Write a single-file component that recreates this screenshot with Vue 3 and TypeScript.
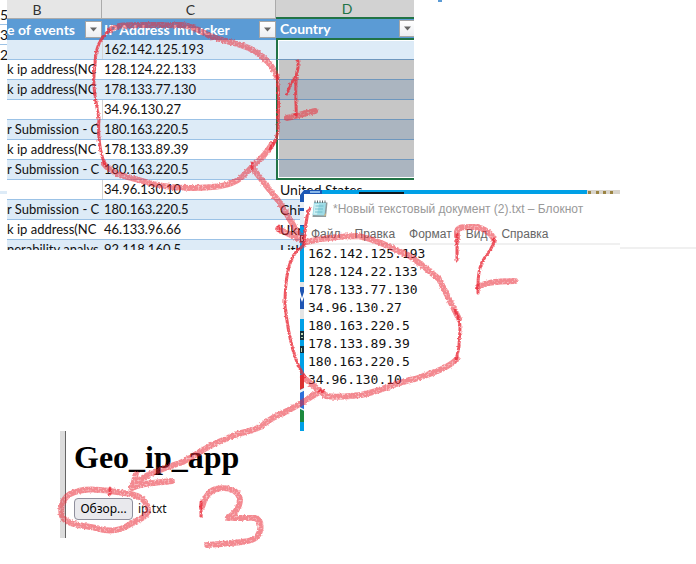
<script setup lang="ts">
import { ref } from 'vue'

interface Row {
  event: string
  ip: string
  country: string
}

const rows: Row[] = [
  { event: '', ip: '162.142.125.193', country: '' },
  { event: 'k ip address(NC', ip: '128.124.22.133', country: '' },
  { event: 'k ip address(NC', ip: '178.133.77.130', country: '' },
  { event: '', ip: '34.96.130.27', country: '' },
  { event: 'r Submission - C', ip: '180.163.220.5', country: '' },
  { event: 'k ip address(NC', ip: '178.133.89.39', country: '' },
  { event: 'r Submission - C', ip: '180.163.220.5', country: '' },
  { event: '', ip: '34.96.130.10', country: 'United States' },
  { event: 'r Submission - C', ip: '180.163.220.5', country: 'Chi' },
  { event: 'k ip address(NC', ip: '46.133.96.66', country: 'Ukr' },
  { event: 'nerability analys', ip: '92.118.160.5', country: 'Lith' },
]
const selectedRows = 7

const headers = ['e of events', 'IP Address Intrucker', 'Country']
const menu = ['Файл', 'Правка', 'Формат', 'Вид', 'Справка']
const edge = ['5.', '3', '2']

const note = ref(rows.slice(0, 8).map((r) => r.ip).join('\n'))
</script>

<template>
  <main class="board">
    <div class="edge">
      <span v-for="e in edge" :key="e">{{ e }}</span>
    </div>
    <div class="edge-line"></div>
    <div class="tick"></div>
    <div class="rule"></div>

    <section class="sheet">
      <table>
        <colgroup>
          <col class="col-b" />
          <col class="col-c" />
          <col class="col-d" />
        </colgroup>
        <thead>
          <tr class="letters">
            <th>B</th>
            <th>C</th>
            <th class="active">D</th>
          </tr>
          <tr class="titles">
            <th v-for="h in headers" :key="h">
              <div class="title">
                <span>{{ h }}</span>
                <button type="button" :aria-label="'Filter ' + h">
                  <svg viewBox="0 0 9 5" width="9" height="5"><path d="M1 0.5H8L4.500 4.500Z" fill="#666" /></svg>
                </button>
              </div>
            </th>
          </tr>
        </thead>
        <tbody>
          <tr v-for="(r, i) in rows" :key="i" :class="{ band: i % 2 === 0, selected: i < selectedRows, first: i === 0, last: i === selectedRows - 1 }">
            <td>{{ r.event }}</td>
            <td :class="{ open: !r.event }">{{ r.ip }}</td>
            <td class="country">{{ r.country }}</td>
          </tr>
        </tbody>
      </table>
    </section>

    <section class="notepad">
      <svg class="desk" viewBox="0 0 320 241" width="320" height="241" aria-hidden="true">
        <path d="M0 0H287V4H4V241H0Z" fill="#00a0e6" />
        <path d="M0 0H22V4H4V36H0Z" fill="#1c57b5" />
        <path d="M10 1H20V3H10Z" fill="#8bb8e8" />
        <path d="M0 0H4L0 5ZM0 12H4V18H0ZM0 21H4V35H0Z" fill="#e8eef5" />
        <path d="M59 2H104V4H59Z" fill="#10171c" />
        <path d="M0 45H4V52H0Z" fill="#1b3f50" />
        <path d="M1 46H3V47H2V49H3V51H1Z" fill="#e8eef5" />
        <path d="M287 0H320V4H287Z" fill="#d9d5cd" />
        <path d="M288 1h3v3h-3zM296 1h3v3h-3zM303 1h3v3h-3zM310 1h3v3h-3z" fill="#9b8443" />
        <path d="M0 92H4V97H0Z" fill="#e4e4e4" />
        <path d="M0 97H4V119H0Z" fill="#1f55b3" />
        <path d="M0 101L2 108L4 102V107L2 112L0 107Z" fill="#fff" />
        <path d="M0 119H4V129H0Z" fill="#e4e4e4" />
        <path d="M0 141H4V150H0ZM0 156H4V163H0Z" fill="#14303c" />
        <path d="M1 143H3V145H1ZM1 147H3V148H1ZM1 158H2V162H1Z" fill="#b9d3b0" />
        <path d="M0 185H4V198L0 200Z" fill="#d93030" />
        <path d="M0 200L4 198V201L0 203ZM0 217L4 219V221L0 219Z" fill="#eef2f6" />
        <path d="M0 203L4 201V219L0 217Z" fill="#2d6fd9" />
        <path d="M0 219L4 221V232H0Z" fill="#1d8a3e" />
      </svg>
      <div class="window">
        <header>
          <svg class="icon" viewBox="0 0 16 18" width="16" height="18" aria-hidden="true">
            <path d="M2.500 2L15.500 2.500L14 17H0.500Z" fill="#8f9a9c" />
            <path d="M2 2L14 2.500L12.500 15.500L0.500 15Z" fill="#9fdce6" />
            <path d="M2.500 4L7 4L5 14.500L1.500 14.500Z" fill="#cdf0f4" />
            <path d="M3.500 6H11.500M3 9H11M3 12H10.500" stroke="#62b4c4" stroke-width="0.800" />
            <path d="M3 0.500V3M5.500 0.500V3M8 0.500V3M10.500 0.500V3M13 0.500V3" stroke="#626b6e" />
            <path d="M12 15.500L14 13L13.500 16Z" fill="#e2c27c" />
          </svg>
          <span>*Новый текстовый документ (2).txt – Блокнот</span>
        </header>
        <nav>
          <button v-for="m in menu" :key="m" type="button">{{ m }}</button>
        </nav>
        <textarea v-model="note" aria-label="Блокнот" rows="8" spellcheck="false"></textarea>
      </div>
    </section>

    <section class="app">
      <h1>Geo_ip_app</h1>
      <div class="picker">
        <button type="button">Обзор...</button>
        <span>ip.txt</span>
      </div>
    </section>

    <svg class="marks" viewBox="0 0 696 564" width="696" height="564" aria-hidden="true">
      <defs>
        <filter id="grain" x="0" y="0" width="696" height="564" filterUnits="userSpaceOnUse">
          <feTurbulence type="fractalNoise" baseFrequency="0.500" numOctaves="2" seed="4" result="n" />
          <feDisplacementMap in="SourceGraphic" in2="n" scale="3" xChannelSelector="R" yChannelSelector="G" result="d" />
          <feColorMatrix in="n" type="matrix" values="0 0 0 0 0  0 0 0 0 0  0 0 0 0 0  1.800 0 0 0 0.100" result="m" />
          <feComposite in="d" in2="m" operator="in" />
        </filter>
      </defs>
      <g class="ink" filter="url(#grain)">
        <g class="wide">
          <path d="M110 30C116 25 125 25 138 25H182C193 26 200 31 210 36C225 42 240 43 253 50C265 57 273 66 277 77" />
          <path d="M104 164C112 174 124 176 139 180C160 187 183 190 212 187C228 186 238 181 243 176L252 167C260 160 268 151 272 144" />
          <path d="M252 167C262 181 270 190 277 199C287 212 294 229 304 242" />
          <path d="M278 229L304 241" />
          <path d="M306 242C324 238 340 236 358 236C377 239 393 249 408 255C419 262 429 271 439 279L459 319" />
          <path d="M457 359C447 369 430 374 415 379C397 382 381 391 361 395C349 396 338 398 326 396L303 377" />
          <path d="M321 391C308 398 301 404 289 410C278 416 271 417 262 426C250 433 240 431 226 439C207 445 196 456 180 463C166 468 148 472 132 486" />
          <path d="M133 486L136 474M132 488C144 482 159 483 172 481" />
          <path d="M111 491C95 489 82 488 70 494C62 499 60 508 62 516C66 525 82 525 96 528C107 532 119 531 127 526C136 520 148 518 148 509C146 498 135 494 124 493L110 491" />
          <path d="M287 118L295 116L315 111" />
          <path d="M457 240V234C456 226 463 227 475 227C485 228 493 235 494 240" />
          <path d="M478 287C486 282 499 281 515 281" />
          <path d="M202 507C204 500 208 491 216 489C226 487 237 488 240 499C240 508 234 514 228 518H255C262 520 262 530 257 537C251 543 229 543 207 545" />
        </g>
        <g class="thin">
          <path d="M110 30C99 38 95 49 95 65C92 83 95 96 99 119C98 133 99 150 105 165" />
          <path d="M277 75C280 92 278 116 278 131C276 141 274 144 270 149M252 163V169" />
          <path d="M310 208C306 215 305 229 304 245L296 252C286 264 285 287 285 305C288 333 293 361 305 377" />
          <path d="M455 310C463 324 459 333 459 347L456 360" />
          <path d="M298 61C299 72 296 78 291 83L287 94M297 71C294 92 297 105 296 116" />
          <path d="M457 234V260M494 239C494 250 485 254 482 263C477 272 478 284 478 293" />
          <path d="M201 502V516M110 488V494M319 391H324M279 226V232" />
        </g>
      </g>
    </svg>
  </main>
</template>

<style>
body {
  margin: 0;
  background: #fff;
}
</style>

<style scoped>
.board {
  position: relative;
  min-height: 564px;
  overflow: hidden;
  color: #111;
}
.edge {
  position: absolute;
  left: 0;
  top: 5px;
  width: 7px;
  overflow: hidden;
  font: 14px/19px Lato, "Open Sans", sans-serif;
}
.edge span {
  display: block;
  border-bottom: 1px solid #9dc3e6;
}
.edge span:last-child {
  border-bottom: 0;
}
.edge-line {
  position: absolute;
  left: 0;
  top: 191px;
  width: 7px;
  height: 3px;
  background: #ddebf7;
}
.tick {
  position: absolute;
  left: 438px;
  top: 0;
  width: 4px;
  height: 2px;
  background: #5b9bd5;
}
.rule {
  position: absolute;
  left: 620px;
  right: 0;
  top: 247px;
  height: 2px;
  background: #f0f0f0;
}
.sheet {
  position: absolute;
  left: 7px;
  top: 0;
  height: 250px;
  overflow: hidden;
}
table {
  width: 407px;
  table-layout: fixed;
  border-collapse: separate;
  border-spacing: 0;
  font: 14px/19px Lato, "Open Sans", sans-serif;
}
.col-b {
  width: 95px;
}
.col-c {
  width: 174px;
}
.letters th {
  height: 18px;
  padding: 0 34px 0 0;
  box-sizing: border-box;
  font-weight: 400;
  line-height: 17px;
  color: #333;
  background: #e6e6e6;
  border-right: 1px solid #ababab;
  border-bottom: 1px solid #ababab;
}
.letters th:nth-child(2) {
  padding: 0 0 0 4px;
}
.letters th.active {
  padding: 0 0 0 4px;
  color: #217346;
  background: #d2d2d2;
  border-right: 0;
  border-bottom: 2px solid #217346;
}
.titles th {
  height: 21px;
  padding: 0;
  text-align: left;
  line-height: 17px;
  color: #fff;
  background: #5b9bd5;
}
.titles th:last-child {
  border-bottom: 2px solid #217346;
  height: 19px;
}
.title {
  display: flex;
  align-items: center;
  justify-content: space-between;
  padding-left: 2px;
}
.titles th:first-child .title {
  padding-left: 0;
}
.titles th:last-child .title {
  padding-left: 4px;
  margin-right: -2px;
}
.title span {
  white-space: nowrap;
}
.title button {
  display: flex;
  align-items: center;
  justify-content: center;
  width: 17px;
  height: 17px;
  padding: 0;
  border: 1px solid #a6a6a6;
  background: linear-gradient(#fff, #eceef2);
}
td {
  height: 19px;
  padding: 0 0 0 2px;
  overflow: hidden;
  white-space: nowrap;
  font-size: 13px;
  border-bottom: 1px solid #9bc2e6;
}
td:first-child {
  padding-left: 0;
}
td.country {
  padding-left: 4px;
  font-size: 14px;
}
.open {
  box-shadow: inset 1px 0 #d4d4d4;
}
.band td {
  background: #ddebf7;
}
.selected .country {
  border-left: 2px solid #217346;
  background: #c6c6c6;
  border-bottom-color: #6f97bd;
  box-shadow: inset 1px 0 #fff;
}
.selected.band .country {
  background: #abb5c0;
}
.selected.first .country {
  background: #ddebf7;
  box-shadow: inset 1px 1px #fff;
}
.selected.last .country {
  height: 18px;
  line-height: 18px;
  border-bottom: 2px solid #217346;
  box-shadow: inset 1px -1px #fff;
}
.notepad {
  position: absolute;
  left: 300px;
  top: 190px;
  width: 320px;
}
.desk {
  position: absolute;
  left: 0;
  top: 0;
}
.window {
  position: relative;
  margin: 4px 0 0 4px;
  background: #fff;
  font: 12px/16px "Liberation Sans", Arial, sans-serif;
}
.window header {
  display: flex;
  align-items: center;
  gap: 5px;
  height: 30px;
  padding-left: 8px;
  color: #999;
  white-space: nowrap;
}
.window nav {
  display: flex;
  gap: 14px;
  height: 19px;
  padding-left: 7px;
  border-bottom: 2px solid #f0f0f0;
}
.window nav button {
  padding: 0;
  border: 0;
  background: none;
  font: inherit;
  color: #666;
}
textarea {
  display: block;
  width: 100%;
  box-sizing: border-box;
  padding: 0 4px;
  margin: 0;
  border: 0;
  outline: 0;
  resize: none;
  overflow: hidden;
  background: #fff;
  color: #111;
  font: 13px/18px "DejaVu Sans Mono", monospace;
}
.app {
  position: absolute;
  left: 60px;
  top: 431px;
  width: 190px;
  box-sizing: border-box;
  height: 107px;
  padding: 8px 0 0 9px;
  border-left: 5px solid #dcdcdc;
  box-shadow: inset 1px 0 #666;
}
h1 {
  margin: 0;
  font: bold 32px/37px "Liberation Serif", serif;
  color: #000;
}
.picker {
  display: flex;
  align-items: center;
  gap: 5px;
  margin-top: 22px;
  font: 12px/18px "Noto Sans", "Open Sans", sans-serif;
}
.picker button {
  box-sizing: border-box;
  width: 59px;
  height: 22px;
  padding: 0;
  border: 1px solid #8f8f9d;
  border-radius: 4px;
  background: #e9e9ed;
  font: inherit;
  color: #000;
}
.marks {
  position: absolute;
  left: 0;
  top: 0;
  pointer-events: none;
}
.ink {
  fill: none;
  stroke: #ea2a38;
  stroke-linecap: round;
  stroke-linejoin: round;
}
.wide {
  stroke-width: 6px;
  opacity: 0.55;
}
.thin {
  stroke-width: 3px;
  opacity: 0.8;
}
</style>
